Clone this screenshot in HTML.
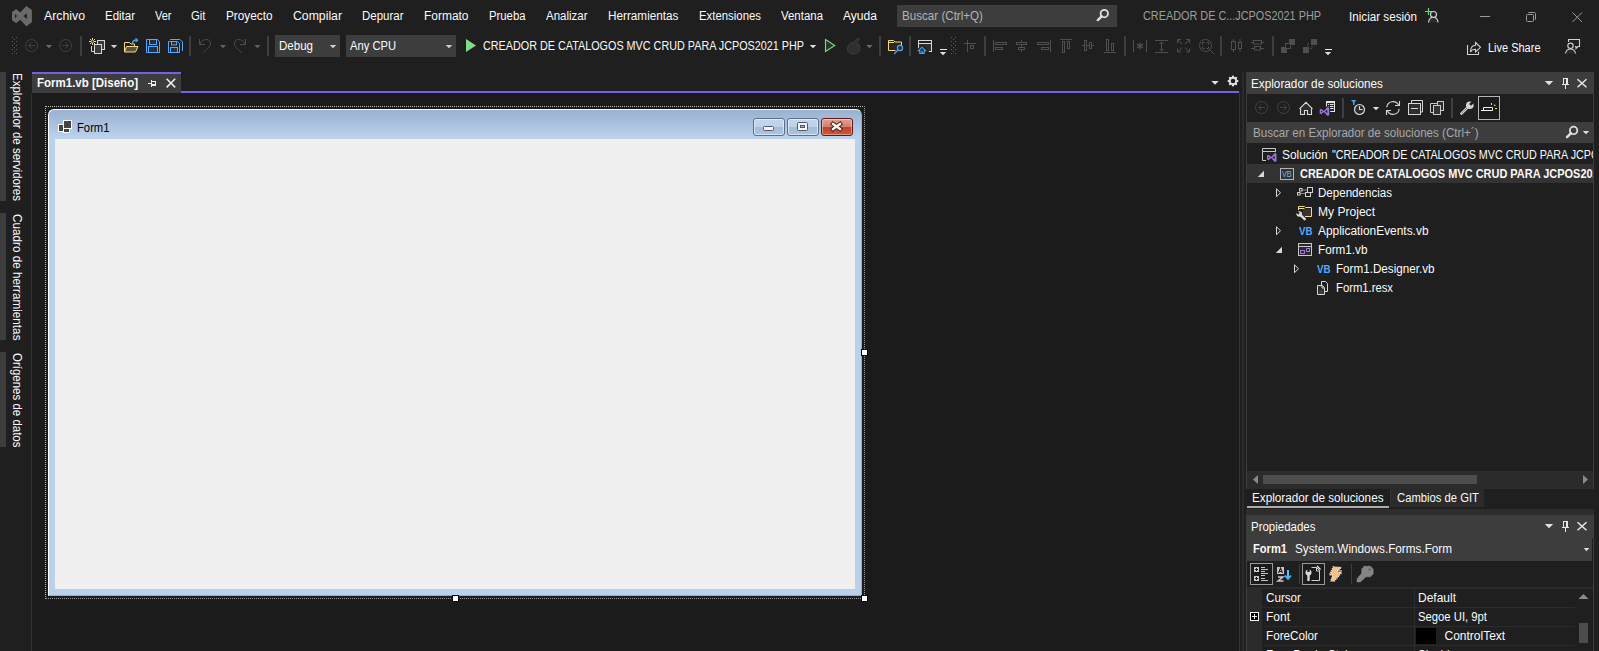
<!DOCTYPE html>
<html lang="es"><head><meta charset="utf-8"><title>Form1.vb [Diseño] - Visual Studio</title>
<style>
html,body{margin:0;padding:0;background:#1f1f1f;overflow:hidden}
#app{position:relative;width:1599px;height:651px;overflow:hidden;background:#1f1f1f;font-family:"Liberation Sans",sans-serif;font-size:12px}
#app>div,#app>svg,#app>span{position:absolute;display:block}
#app>svg{overflow:visible}
.t{white-space:pre;line-height:16px;transform-origin:0 50%;color:#fafafa}

</style></head>
<body>
<div id="app">
<div style="left:897px;top:5px;width:220px;height:22px;background:#3d3d3d;"></div>
<div style="left:275px;top:35px;width:65px;height:22px;background:#3d3d3d;"></div>
<div style="left:346px;top:35px;width:110px;height:22px;background:#3d3d3d;"></div>
<div style="left:80px;top:36px;width:2px;height:20px;background:#3f3f3f;"></div>
<div style="left:189px;top:36px;width:2px;height:20px;background:#3f3f3f;"></div>
<div style="left:267px;top:36px;width:2px;height:20px;background:#3f3f3f;"></div>
<div style="left:879px;top:36px;width:2px;height:20px;background:#3f3f3f;"></div>
<div style="left:909px;top:36px;width:2px;height:20px;background:#3f3f3f;"></div>
<div style="left:984px;top:36px;width:2px;height:20px;background:#3f3f3f;"></div>
<div style="left:1124px;top:36px;width:2px;height:20px;background:#3f3f3f;"></div>
<div style="left:1220px;top:36px;width:2px;height:20px;background:#3f3f3f;"></div>
<div style="left:1272px;top:36px;width:2px;height:20px;background:#3f3f3f;"></div>
<div style="left:0px;top:72px;width:6px;height:129px;background:#3d3d3d;"></div>
<div style="left:0px;top:213px;width:6px;height:127px;background:#3d3d3d;"></div>
<div style="left:0px;top:352px;width:6px;height:95px;background:#3d3d3d;"></div>
<div style="left:32px;top:72px;width:149px;height:2px;background:#7160e8;"></div>
<div style="left:32px;top:74px;width:149px;height:18px;background:#3d3d3d;"></div>
<div style="left:181px;top:91px;width:1058px;height:2px;background:#7160e8;"></div>
<div style="left:32px;top:74px;width:149px;height:19px;background:#3d3d3d;"></div>
<div style="left:32px;top:93px;width:1207px;height:558px;background:#1b1b1b;"></div>
<div style="left:31px;top:93px;width:1px;height:558px;background:#333333;"></div>
<div style="left:1239px;top:93px;width:1px;height:558px;background:#333333;"></div>
<div style="left:1242px;top:72px;width:2px;height:579px;background:#2b2b2b;"></div>
<div style="left:45px;top:106px;width:820px;height:493px;background:transparent;box-sizing:border-box;border:1px dotted #9a9a9a;border-top-color:#bdbdbd;border-left-color:#bdbdbd"></div>
<div style="left:48px;top:109px;width:814px;height:487px;background:#b9d1ea;box-sizing:border-box;border:1px solid #fff;border-right-color:#35d2f2;border-bottom-color:#35d2f2;border-radius:6px 6px 0 0;background:linear-gradient(#9ab2d0 0,#a9c1de 14px,#bdd3ec 28px,#b9d1ea 29px)"></div>
<div style="left:55px;top:139px;width:800px;height:450px;background:#f0f0f0;"></div>
<div style="left:753px;top:118px;width:32px;height:18px;background:#b4cbe4;box-sizing:border-box;border:1px solid #5c6f8a;border-radius:3px;box-shadow:inset 0 0 0 1px rgba(255,255,255,.55);background:linear-gradient(#c3d7ee 0,#bcd1ea 8px,#a3bcd9 8px,#aec6e1 18px)"></div>
<div style="left:787px;top:118px;width:32px;height:18px;background:#b4cbe4;box-sizing:border-box;border:1px solid #5c6f8a;border-radius:3px;box-shadow:inset 0 0 0 1px rgba(255,255,255,.55);background:linear-gradient(#c3d7ee 0,#bcd1ea 8px,#a3bcd9 8px,#aec6e1 18px)"></div>
<div style="left:821px;top:118px;width:32px;height:18px;background:#c9503a;box-sizing:border-box;border:1px solid #5a1a1a;border-radius:3px;box-shadow:inset 0 0 0 1px rgba(255,255,255,.4);background:linear-gradient(#e0a092 0,#d47f6e 8px,#c0432b 8px,#cf5b3d 18px)"></div>
<div style="left:862px;top:350px;width:5px;height:5px;background:#fff;box-sizing:border-box;border:1px solid #000;width:7px;height:7px;margin:-1px"></div>
<div style="left:453px;top:596px;width:5px;height:5px;background:#fff;box-sizing:border-box;border:1px solid #000;width:7px;height:7px;margin:-1px"></div>
<div style="left:862px;top:596px;width:5px;height:5px;background:#fff;box-sizing:border-box;border:1px solid #000;width:7px;height:7px;margin:-1px"></div>
<div style="left:1246px;top:72px;width:348px;height:22px;background:#3d3d3d;"></div>
<div style="left:1246px;top:94px;width:348px;height:395px;background:#1f1f1f;box-sizing:border-box;border-left:1px solid #3d3d3d;border-right:1px solid #3d3d3d"></div>
<div style="left:1478px;top:96px;width:22px;height:24px;background:#1b1b1b;box-sizing:border-box;border:1px solid #b4b4b4"></div>
<div style="left:1247px;top:122px;width:346px;height:21px;background:#3d3d3d;"></div>
<div style="left:1247px;top:164px;width:346px;height:19px;background:#333333;"></div>
<div style="left:1247px;top:471px;width:346px;height:18px;background:#2b2b2b;"></div>
<div style="left:1263px;top:475px;width:214px;height:9px;background:#4d4d4d;"></div>
<div style="left:1247px;top:506px;width:142px;height:2px;background:#ababab;"></div>
<div style="left:1390px;top:489px;width:94px;height:18px;background:#2b2b2b;box-sizing:border-box;border-left:1px solid #333"></div>
<div style="left:1246px;top:509px;width:348px;height:6px;background:#2d2d2d;"></div>
<div style="left:1246px;top:515px;width:348px;height:46px;background:#3d3d3d;"></div>
<div style="left:1592px;top:538px;width:1px;height:23px;background:#1f1f1f;"></div>
<div style="left:1246px;top:561px;width:348px;height:90px;background:#1f1f1f;box-sizing:border-box;border-left:1px solid #3d3d3d;border-right:1px solid #3d3d3d"></div>
<div style="left:1250px;top:563px;width:23px;height:22px;background:#1b1b1b;box-sizing:border-box;border:1px solid #9a9a9a"></div>
<div style="left:1302px;top:563px;width:23px;height:22px;background:#1b1b1b;box-sizing:border-box;border:1px solid #9a9a9a"></div>
<div style="left:1299px;top:564px;width:1px;height:20px;background:#3f3f3f;"></div>
<div style="left:1351px;top:564px;width:1px;height:20px;background:#3f3f3f;"></div>
<div style="left:1247px;top:587px;width:346px;height:64px;background:#2b2b2b;"></div>
<div style="left:1262px;top:589px;width:152px;height:18px;background:#1f1f1f;"></div>
<div style="left:1415px;top:589px;width:160px;height:18px;background:#1f1f1f;"></div>
<div style="left:1262px;top:608px;width:152px;height:18px;background:#1f1f1f;"></div>
<div style="left:1415px;top:608px;width:160px;height:18px;background:#1f1f1f;"></div>
<div style="left:1262px;top:627px;width:152px;height:18px;background:#1f1f1f;"></div>
<div style="left:1415px;top:627px;width:160px;height:18px;background:#1f1f1f;"></div>
<div style="left:1262px;top:646px;width:152px;height:18px;background:#1f1f1f;"></div>
<div style="left:1415px;top:646px;width:160px;height:18px;background:#1f1f1f;"></div>
<div style="left:1416px;top:628px;width:20px;height:16px;background:#000;"></div>
<div style="left:1575px;top:589px;width:18px;height:62px;background:#1f1f1f;"></div>
<div style="left:1579px;top:623px;width:9px;height:20px;background:#4d4d4d;"></div>
<svg style="left:0;top:0" width="1599" height="651" viewBox="0 0 1599 651"><path transform="translate(12,6)" fill="#6a6a6a" fill-rule="evenodd" d="M0,6.1 L4.2,3 L8.2,6.4 L14.3,0 L19.9,4 V16.2 L14.3,20.2 L8.2,13.8 L4.2,17.2 L0,14.2Z M3.1,7.7 V12.3 L5,10Z M14.9,7.2 V13 L11.6,10Z"/><rect x="12" y="37" width="1" height="1" fill="#5e5e5e"/><rect x="16" y="37" width="1" height="1" fill="#5e5e5e"/><rect x="14" y="39" width="1" height="1" fill="#5e5e5e"/><rect x="12" y="41" width="1" height="1" fill="#5e5e5e"/><rect x="16" y="41" width="1" height="1" fill="#5e5e5e"/><rect x="14" y="43" width="1" height="1" fill="#5e5e5e"/><rect x="12" y="45" width="1" height="1" fill="#5e5e5e"/><rect x="16" y="45" width="1" height="1" fill="#5e5e5e"/><rect x="14" y="47" width="1" height="1" fill="#5e5e5e"/><rect x="12" y="49" width="1" height="1" fill="#5e5e5e"/><rect x="16" y="49" width="1" height="1" fill="#5e5e5e"/><rect x="14" y="51" width="1" height="1" fill="#5e5e5e"/><rect x="12" y="53" width="1" height="1" fill="#5e5e5e"/><rect x="16" y="53" width="1" height="1" fill="#5e5e5e"/><g fill="none" stroke="#404040" stroke-width="1"><circle cx="31.5" cy="45.5" r="6"/><path d="M35,45.5H28.5M31.5,42.5l-3,3l3,3"/><circle cx="65.5" cy="45.5" r="6"/><path d="M62,45.5H68.5M65.5,42.5l3,3l-3,3"/></g><path d="M45.8,45h6.4l-3.2,3.2z" fill="#6a6a6a"/><g fill="none" stroke="#f3d98b" stroke-width="1"><path d="M92.5,38v7M89,41.5h7M90,39l5,5M95,39l-5,5"/></g><rect x="91.5" y="40.5" width="2" height="2" fill="#1f1f1f"/><g stroke="#d6d6d6" stroke-width="1"><path d="M91.5,46V51.5H94.5" fill="none"/><rect x="97.5" y="40.5" width="7" height="9" fill="#3a3a3a"/><rect x="94.5" y="44.5" width="7" height="9" fill="#3a3a3a"/></g><path d="M110.8,45h6.4l-3.2,3.2z" fill="#d0d0d0"/><g stroke="#f3d98b" stroke-width="1" fill="none"><path d="M124.5,52V42.5h5l1.5,1.5h3.5V46"/><path d="M126.5,46.5H138l-2.5,5.5H124.5z" fill="#5e543a"/></g><path d="M132.5,44c0-2.5,1.5-4,4-4" fill="none" stroke="#4aa5f0" stroke-width="1.4"/><path d="M135.6,37.6l2.9,2.6l-2.9,2.6z" fill="#4aa5f0"/><g stroke="#55aaff" stroke-width="1" fill="none"><path d="M146.5,39.5H157.5l2,2V52.5H146.5z"/><rect x="149.5" y="39.5" width="7" height="5" fill="#2a3038"/><rect x="148.5" y="46.5" width="9" height="6" fill="#2a3038"/></g><g stroke="#55aaff" stroke-width="1" fill="none"><path d="M170,39.5H180l2.5,2.5V51"/><path d="M168.5,41.5H177.5l2,2V52.5H168.5z"/><rect x="171.5" y="41.5" width="5" height="3.5" fill="#2a3038"/><rect x="170.5" y="47.5" width="7" height="5" fill="#2a3038"/></g><g fill="none" stroke="#4d4d4d" stroke-width="1"><path d="M199.5,39V44.5H205"/><path d="M200,44c1.5-3,3.5-4.5,6.3-4.5c2.8,0,4.5,2,4.3,4.6c-.2,2-1.6,3.2-7.3,8.6"/><path d="M245.5,39V44.5H240"/><path d="M245,44c-1.500-3-3.500-4.500-6.300-4.500c-2.800,0-4.500,2-4.300,4.600c.2,2,1.600,3.200,7.300,8.600"/></g><path d="M219.8,45h6.4l-3.2,3.2z" fill="#5e5e5e"/><path d="M254.3,45h6.4l-3.2,3.2z" fill="#5e5e5e"/><path d="M329.8,45h6.4l-3.2,3.2z" fill="#d0d0d0"/><path d="M445.8,45h6.4l-3.2,3.2z" fill="#d0d0d0"/><path d="M466,39l10,6.500l-10,6.500z" fill="#7edc8b"/><path d="M809.8,45h6.4l-3.2,3.2z" fill="#e0e0e0"/><path d="M825.5,39.5V51.500l9.200-6z" fill="#25362a" stroke="#7adb8a" stroke-width="1.100"/><path d="M859.500,38.500c-4,.5-6,3-6.500,5.500c-1-.5-1.500-1-1.500-2c-2.500,2-4,4.500-4,7c0,3,2.500,5,6,5c4,0,6.500-2.500,6.500-5.500c0-1.500-.5-2.500-1-4c-.5,1-1,1.500-2,2c.5-3,.5-5.500,2.500-8z" fill="#2e2e2e" stroke="#3e3e3e" stroke-width="1"/><path d="M866.3,45h6.4l-3.2,3.2z" fill="#6a6a6a"/><path d="M888.500,50.500V40.500h5l1.500,1.500h6.500v5.500h-5v3z" fill="#2d2920" stroke="none"/><path d="M895.500,50.500H888.500V40.500h5l1.500,1.500h6.500v4.500M889,42.500h5" fill="none" stroke="#f3d98b"/><circle cx="900" cy="48" r="2.600" fill="#26323f" stroke="#4aa5f0" stroke-width="1.200"/><path d="M898,50l-4,4" stroke="#4aa5f0" stroke-width="1.200"/><rect x="918.500" y="40.500" width="13" height="11" fill="#2e2e2e" stroke="#d8d8d8"/><rect x="919" y="41" width="12" height="2" fill="#1f1f1f"/><path d="M919,43.500h12" stroke="#d8d8d8"/><path d="M922,46.500l-4.300,4.200h1.600V54h5.400V50.700h1.600z" fill="#1f1f1f" stroke="#1f1f1f" stroke-width="2.500"/><path d="M922,47.200l-3.600,3.600h1.400V53.500h4.400V50.800h1.400z" fill="#23364a" stroke="#4aa5f0" stroke-width="1.100"/><rect x="921.300" y="51.300" width="1.500" height="1.700" fill="#4aa5f0"/><rect x="940" y="49" width="7" height="1" fill="#e8e8e8"/><path d="M939.8,52h6.4l-3.2,3.2z" fill="#e0e0e0"/><rect x="951" y="37" width="1" height="1" fill="#5e5e5e"/><rect x="955" y="37" width="1" height="1" fill="#5e5e5e"/><rect x="953" y="39" width="1" height="1" fill="#5e5e5e"/><rect x="951" y="41" width="1" height="1" fill="#5e5e5e"/><rect x="955" y="41" width="1" height="1" fill="#5e5e5e"/><rect x="953" y="43" width="1" height="1" fill="#5e5e5e"/><rect x="951" y="45" width="1" height="1" fill="#5e5e5e"/><rect x="955" y="45" width="1" height="1" fill="#5e5e5e"/><rect x="953" y="47" width="1" height="1" fill="#5e5e5e"/><rect x="951" y="49" width="1" height="1" fill="#5e5e5e"/><rect x="955" y="49" width="1" height="1" fill="#5e5e5e"/><rect x="953" y="51" width="1" height="1" fill="#5e5e5e"/><rect x="951" y="53" width="1" height="1" fill="#5e5e5e"/><rect x="955" y="53" width="1" height="1" fill="#5e5e5e"/><g fill="none" stroke="#4f4f4f" stroke-width="1"><path d="M967.500,40V52M964,43.500H976"/><rect x="970.500" y="45.500" width="3" height="3"/><path d="M993.500,40V52"/><rect x="995.500" y="42.500" width="11" height="2"/><rect x="995.500" y="47.500" width="7" height="2"/><path d="M1021.500,40V42.500M1021.500,44.500V47.500M1021.500,49.500V52"/><rect x="1016.500" y="42.500" width="10" height="2"/><rect x="1018.500" y="47.500" width="6" height="2"/><path d="M1050.500,40V52"/><rect x="1037.500" y="42.500" width="11" height="2"/><rect x="1041.500" y="47.500" width="7" height="2"/><path d="M1060,39.500H1072"/><rect x="1062.500" y="41.500" width="2" height="11"/><rect x="1067.500" y="41.500" width="2" height="7"/><path d="M1082,45.500H1084.500M1086.500,45.500H1089.500M1091.500,45.500H1094"/><rect x="1084.500" y="40.500" width="2" height="10"/><rect x="1089.500" y="42.500" width="2" height="6"/><path d="M1104,52.500H1116"/><rect x="1106.500" y="39.500" width="2" height="11"/><rect x="1111.500" y="43.500" width="2" height="7"/><path d="M1133.500,40V52M1146.500,40V52"/><path d="M1140,42.500V49.500M1137,44.200l6,3.600M1143,44.200l-6,3.600" stroke-width="1.400"/><path d="M1155,40.500H1168M1155,52.500H1168M1161.500,42V51M1159.500,44l2-2l2,2M1159.500,49l2,2l2-2"/><path d="M1177.500,43V39.500H1181M1186,39.500H1189.500V43M1189.500,48.500V52H1186M1181,52H1177.500V48.500M1178,40l4,4M1189,40l-4,4M1189,51.500l-4-4M1178,51.500l4-4"/><circle cx="1205.500" cy="45.500" r="6"/><path d="M1210,50l4,4M1202.500,44.500V42.500h2M1206.500,42.500h2v2M1208.500,46.500v2h-2M1204.500,48.500h-2v-2"/><path d="M1233.500,39V52M1240,39V52"/><rect x="1231.500" y="41.500" width="4" height="8" fill="#1f1f1f"/><rect x="1238.500" y="42.500" width="3" height="6" fill="#1f1f1f"/><path d="M1251,42.500H1264M1251,48.500H1264"/><rect x="1253.500" y="40.500" width="8" height="3.500" fill="#1f1f1f"/><rect x="1254.500" y="46.500" width="6" height="3.500" fill="#1f1f1f"/></g><rect x="1281" y="47" width="6" height="6" fill="#4f4f4f"/><rect x="1289" y="39" width="6" height="6" fill="#4f4f4f"/><rect x="1285.500" y="43.500" width="5" height="5" fill="#1f1f1f" stroke="#4f4f4f"/><rect x="1303" y="47" width="6" height="6" fill="#4f4f4f"/><rect x="1311" y="39" width="6" height="6" fill="#4f4f4f"/><path d="M1307.500,46V43.500h2.500M1312,46V48.500h-2" fill="none" stroke="#4f4f4f" stroke-dasharray="1.500,1"/><rect x="1325" y="49" width="7" height="1" fill="#e8e8e8"/><path d="M1324.8,52h6.4l-3.2,3.2z" fill="#e0e0e0"/><g fill="none" stroke="#d0d0d0" stroke-width="1.100"><path d="M1467.500,45V54.500H1478.500V51.500"/><path d="M1475.500,42.500L1480.500,47.300L1475.500,52V49.300C1473,49.300 1471.500,50 1470.500,52C1470.500,48 1472.500,45.500 1475.500,45.300Z"/></g><g fill="none" stroke="#d0d0d0" stroke-width="1.100"><path d="M1568.500,42V39.500H1579.500V46.500H1578L1576,48.500V46.500H1575"/><circle cx="1570.500" cy="45.800" r="2.700" fill="#1f1f1f"/><path d="M1565.500,53.500c.5-3,2.500-4.500,5-4.500s4.500,1.500,5,4.500" fill="#2a2a2a"/></g><path d="M1428.500,8v7M1425,11.500h7" stroke="#6fd77a" stroke-width="1.200" fill="none"/><g fill="none" stroke="#d8d8d8" stroke-width="1.100"><circle cx="1433.500" cy="14.500" r="3" fill="#1f1f1f"/><path d="M1428.500,22.500c.4-3.500,2.400-5.200,4.800-5.200s4.400,1.700,4.800,5.200" fill="#2c2c2c"/></g><rect x="1480" y="16" width="10" height="1" fill="#9b9b9b"/><g fill="none" stroke="#9b9b9b" stroke-width="1"><rect x="1526.500" y="14.500" width="7" height="7" rx="1"/><path d="M1528.500,13V12.500H1534.500a1,1 0 0 1 1,1V19.500H1535"/></g><path d="M1572.500,12.500l9.500,9.500M1582,12.500l-9.500,9.500" stroke="#9b9b9b" stroke-width="1" fill="none"/><circle cx="1104.300" cy="13.600" r="3.700" fill="none" stroke="#e0e0e0" stroke-width="1.800"/><path d="M1101.600,16.300l-3.800,3.800" stroke="#e0e0e0" stroke-width="2.400" stroke-linecap="round"/></svg>
<svg style="left:0;top:0" width="1599" height="651" viewBox="0 0 1599 651"><g fill="none" stroke="#f0f0f0" stroke-width="1"><path d="M148,83.500H151.500M151.500,80V87M152,81.500h4M152,85.500h4M155.500,81V86"/></g><rect x="152" y="84" width="4" height="1.500" fill="#f0f0f0"/><path d="M166.6,78.8l8.6,8.6M175.2,78.8l-8.6,8.6" stroke="#f0f0f0" stroke-width="1.5" fill="none"/><path d="M1211.3,81h7.4l-3.7,3.7z" fill="#e0e0e0"/><g transform="translate(1233,81)"><circle r="3.300" fill="none" stroke="#e0e0e0" stroke-width="2"/><circle r="1.300" fill="none" stroke="#1f1f1f" stroke-width=".8"/><rect x="-1" y="-5.300" width="2" height="2" fill="#e0e0e0" transform="rotate(0)"/><rect x="-1" y="-5.300" width="2" height="2" fill="#e0e0e0" transform="rotate(45)"/><rect x="-1" y="-5.300" width="2" height="2" fill="#e0e0e0" transform="rotate(90)"/><rect x="-1" y="-5.300" width="2" height="2" fill="#e0e0e0" transform="rotate(135)"/><rect x="-1" y="-5.300" width="2" height="2" fill="#e0e0e0" transform="rotate(180)"/><rect x="-1" y="-5.300" width="2" height="2" fill="#e0e0e0" transform="rotate(225)"/><rect x="-1" y="-5.300" width="2" height="2" fill="#e0e0e0" transform="rotate(270)"/><rect x="-1" y="-5.300" width="2" height="2" fill="#e0e0e0" transform="rotate(315)"/></g><path d="M1544.8,81h8.4l-4.2,4.2z" fill="#e0e0e0"/><g fill="none" stroke="#e8e8e8" stroke-width="1"><path d="M1563.5,78V84M1567.5,78V84M1563,78.5h5M1562,84.5h7M1565.5,85V89"/></g><rect x="1566" y="78" width="1.500" height="6" fill="#e8e8e8"/><path d="M1577.5,79.3l9,8M1586.5,79.3l-9,8" stroke="#e8e8e8" stroke-width="1.5" fill="none"/><path d="M1544.8,524h8.4l-4.2,4.2z" fill="#e0e0e0"/><g fill="none" stroke="#e8e8e8" stroke-width="1"><path d="M1563.5,521V527M1567.5,521V527M1563,521.5h5M1562,527.5h7M1565.5,528V532"/></g><rect x="1566" y="521" width="1.500" height="6" fill="#e8e8e8"/><path d="M1577.5,522.3l9,8M1586.5,522.3l-9,8" stroke="#e8e8e8" stroke-width="1.5" fill="none"/><g fill="none" stroke="#424242" stroke-width="1"><circle cx="1261.500" cy="107.500" r="6"/><path d="M1265,107.500H1258.500M1261.500,104.500l-3,3l3,3"/><circle cx="1283.500" cy="107.500" r="6"/><path d="M1280,107.500H1286.500M1283.500,104.500l3,3l-3,3"/></g><path d="M1300.500,108V114.500H1304.500V110.500H1307.500V114.500H1311.500V108L1306,102.500Z" fill="#2e2e2e" stroke="none"/><path d="M1299.500,108.800L1306,102.300L1312.500,108.800M1300.500,108.500V114.500H1304.500V110.500H1307.500V114.500H1311.500V108.500" fill="none" stroke="#d8d8d8" stroke-width="1.100"/><rect x="1326.500" y="101.500" width="8" height="10" fill="#2a2a2a" stroke="#e6e6e6"/><rect x="1326" y="101" width="9" height="2" fill="#e6e6e6"/><rect x="1328" y="104" width="1" height="1" fill="#e6e6e6"/><rect x="1330" y="104" width="3.500" height="1" fill="#e6e6e6"/><rect x="1328" y="106" width="1" height="1" fill="#e6e6e6"/><rect x="1330" y="106" width="3.500" height="1" fill="#e6e6e6"/><rect x="1328" y="108" width="1" height="1" fill="#e6e6e6"/><rect x="1330" y="108" width="3.500" height="1" fill="#e6e6e6"/><g transform="translate(1319.7,107) scale(1.0)"><path d="M0,2.600 L1.500,1.800 L4.200,4 L7.800,0 L9.500,.8 V8.200 L7.800,9 L4.200,5 L1.500,7.200 L0,6.400Z M1.300,3.400 V5.600 L2.700,4.500Z M7.600,2.700 V6.300 L5.400,4.500Z" fill="#1f1f1f" stroke="#1f1f1f" stroke-width="2" stroke-linejoin="round"/><path d="M0,2.600 L1.500,1.800 L4.200,4 L7.800,0 L9.500,.8 V8.200 L7.800,9 L4.200,5 L1.500,7.200 L0,6.400Z M1.300,3.400 V5.600 L2.700,4.500Z M7.600,2.700 V6.300 L5.400,4.500Z" fill="#a074db" fill-rule="evenodd"/></g><rect x="1342" y="98" width="2" height="20" fill="#3f3f3f"/><rect x="1451" y="98" width="2" height="20" fill="#3f3f3f"/><path d="M1351,100h5.500l-2,2.300V105h-1.500V102.300z" fill="#4aa5f0"/><circle cx="1359.500" cy="109.500" r="5" fill="#2e2e2e" stroke="#d8d8d8" stroke-width="1.200"/><path d="M1359.500,106V109.500H1362.500" fill="none" stroke="#d8d8d8" stroke-width="1.100"/><path d="M1372.8,107h6.4l-3.2,3.2z" fill="#e0e0e0"/><g fill="none" stroke="#d8d8d8" stroke-width="1.100"><path d="M1386.800,107.300A6.200,6.200 0 0 1 1398.600,105.200"/><path d="M1399.500,101V105.500H1395"/><path d="M1399.200,108.700A6.200,6.200 0 0 1 1387.400,110.800"/><path d="M1386.500,115V110.500H1391"/></g><g fill="none" stroke="#d8d8d8" stroke-width="1"><path d="M1411.500,103V100.500H1422.500V112H1421"/><rect x="1408.500" y="103.500" width="12" height="11" fill="#2e2e2e"/><path d="M1411,108.500H1418"/></g><g stroke="#c8c8c8" stroke-width="1" fill="none"><rect x="1437.500" y="101.500" width="6" height="9" fill="#2c2c2c"/><path d="M1437,103.500H1430.500V112.500H1433.500"/><rect x="1433.500" y="105.500" width="7" height="9" fill="#333"/></g><path d="M1468.2,106.8l-6.800000000000001,6.800000000000001" stroke="#d4d4d4" stroke-width="2.600" stroke-linecap="round"/><path d="M1468.2,106.8l-6.6000000000000005,6.6000000000000005" stroke="#1f1f1f" stroke-width=".8" stroke-dasharray="1,.8"/><circle cx="1469.8" cy="105.2" r="3.8" fill="#d4d4d4"/><path d="M1470.1,104.9l3.500,-3.500" stroke="#1f1f1f" stroke-width="2.700"/><path d="M1481,110.500H1492.500V107.500H1483.500V110.500" fill="none" stroke="#f0f0f0" stroke-width="1"/><rect x="1491" y="103" width="1" height="2" fill="#f3d98b"/><rect x="1494" y="104.500" width="1.500" height="1.500" fill="#d6bc72" transform="rotate(45 1494.700 105.200)"/><rect x="1495" y="108" width="2" height="1" fill="#f3d98b"/><circle cx="1573.600" cy="130.400" r="3.700" fill="none" stroke="#e0e0e0" stroke-width="1.800"/><path d="M1571,133.200l-4,4" stroke="#e0e0e0" stroke-width="2.400" stroke-linecap="round"/><path d="M1582.8,131h6.4l-3.2,3.2z" fill="#e0e0e0"/><path d="M1264,177h-6.200l6.200,-6.200z" fill="#d8d8d8"/><path d="M1276.5,188.8V196.7L1280.5,192.75Z" fill="none" stroke="#d8d8d8" stroke-width="1"/><path d="M1276.5,226.8V234.7L1280.5,230.75Z" fill="none" stroke="#d8d8d8" stroke-width="1"/><path d="M1282,253h-6.200l6.200,-6.200z" fill="#d8d8d8"/><path d="M1294.5,264.8V272.7L1298.5,268.75Z" fill="none" stroke="#d8d8d8" stroke-width="1"/><path d="M1266,160.500H1262.500V148.500H1275.500V153M1263,151.500H1275" fill="none" stroke="#c8c8c8"/><g transform="translate(1267,153) scale(1.0)"><path d="M0,2.600 L1.500,1.800 L4.200,4 L7.800,0 L9.500,.8 V8.200 L7.800,9 L4.200,5 L1.500,7.200 L0,6.400Z M1.300,3.400 V5.600 L2.700,4.500Z M7.600,2.700 V6.300 L5.400,4.500Z" fill="#1f1f1f" stroke="#1f1f1f" stroke-width="2" stroke-linejoin="round"/><path d="M0,2.600 L1.500,1.800 L4.200,4 L7.800,0 L9.500,.8 V8.200 L7.800,9 L4.200,5 L1.500,7.200 L0,6.400Z M1.300,3.400 V5.600 L2.700,4.500Z M7.600,2.700 V6.300 L5.400,4.500Z" fill="#a074db" fill-rule="evenodd"/></g><rect x="1280.500" y="168.500" width="13" height="11" fill="none" stroke="#b4b4b4"/><g fill="#1f1f1f" stroke="#d0d0d0" stroke-width="1"><path d="M1300,193.500H1306M1302,190H1307" stroke="#8a8a8a" fill="none"/><rect x="1297.500" y="192.500" width="2.500" height="2.500"/><rect x="1299.500" y="188.500" width="2.500" height="2.500"/><rect x="1307.500" y="187.500" width="5" height="5"/><rect x="1305.500" y="192.500" width="5" height="4"/></g><rect x="1303" y="209" width="8" height="7" fill="#38342a"/><path d="M1298.500,210V206.500h6l1,1h6V216.500H1305M1299,208.500h5.500" fill="none" stroke="#f3d98b"/><path d="M1300.500,215.200l4.200,3.900" stroke="#dcdcdc" stroke-width="2.500" stroke-linecap="round"/><circle cx="1299.300" cy="214" r="2.800" fill="#dcdcdc"/><path d="M1299,213.700l-3,-3" stroke="#1f1f1f" stroke-width="2.200"/><rect x="1298.500" y="243.500" width="13" height="12" fill="#2a2a2a" stroke="#c8c8c8"/><path d="M1299,246.500h12" stroke="#c8c8c8"/><rect x="1300.500" y="250.500" width="4" height="3" fill="none" stroke="#a074db"/><rect x="1306.500" y="248.500" width="3" height="3" fill="none" stroke="#a074db"/><g stroke="#d8d8d8" fill="#1f1f1f" stroke-width="1"><path d="M1321.500,281.500h4l2,2V291.500h-6z"/><path d="M1317.500,285.500h5l2,2V294.500h-7z" fill="#2c2c2c"/><path d="M1322,286v2h2" fill="none"/></g><rect x="1319" y="290" width="4" height="4" fill="#3c3c3c"/><path d="M1258,475v9l-5,-4.500z" fill="#8a8a8a"/><path d="M1583,475v9l5,-4.500z" fill="#8a8a8a"/><path d="M1578.500,599h10l-5,-5z" fill="#8a8a8a"/><path d="M1583.8,548h5.4l-2.7,3.2z" fill="#e0e0e0"/><rect x="1254" y="567" width="5" height="5" fill="#c8c8c8"/><path d="M1256.500,568v3M1255,569.5h3" stroke="#1b1b1b" stroke-width="1"/><rect x="1254" y="576" width="5" height="5" fill="#c8c8c8"/><path d="M1256.500,577v3M1255,578.5h3" stroke="#1b1b1b" stroke-width="1"/><rect x="1261" y="567" width="4" height="1" fill="#c8c8c8"/><rect x="1261" y="569" width="6" height="1" fill="#c8c8c8"/><rect x="1261" y="571" width="4" height="1" fill="#c8c8c8"/><rect x="1261" y="573" width="6" height="1" fill="#c8c8c8"/><rect x="1261" y="575" width="4" height="1" fill="#c8c8c8"/><rect x="1261" y="578" width="4" height="1" fill="#c8c8c8"/><rect x="1261" y="580" width="6" height="1" fill="#c8c8c8"/><rect x="1266" y="569" width="2" height="1" fill="#c8c8c8"/><rect x="1266" y="573" width="2" height="1" fill="#c8c8c8"/><rect x="1266" y="580" width="2" height="1" fill="#c8c8c8"/><rect x="1277" y="567" width="7" height="7" fill="#c8c8c8"/><path d="M1278.500,573l2,-5l2,5M1279.300,571.500h2.400" stroke="#1f1f1f" fill="none" stroke-width="1.100"/><path d="M1278,577h5l-5,4h5.500" fill="none" stroke="#c8c8c8" stroke-width="1.500"/><path d="M1288,570v7" stroke="#4fc1ff" stroke-width="2" fill="none"/><path d="M1285,575.500l3,3.500l3,-3.500" stroke="#4fc1ff" stroke-width="1.600" fill="none"/><path d="M1311.500,567.500h5l3,3V580.500h-8" fill="#1b1b1b" stroke="#d0d0d0"/><path d="M1316.500,567.500v3.500h3" fill="none" stroke="#d0d0d0"/><path d="M1317,566l3.500,3.500" stroke="#f0f0f0" stroke-width="1.200"/><path d="M1308.500,574v7" stroke="#d8d8d8" stroke-width="2.400"/><circle cx="1308.500" cy="572.500" r="3" fill="#d8d8d8"/><rect x="1307.300" y="568.500" width="2.400" height="3.500" fill="#1b1b1b"/><path d="M1333.500,566.500L1341.500,567L1337.300,572H1342L1334,581.500H1330.500L1332.500,575.500H1329.500Z" fill="#f7c18e"/><path d="M1333.300,566.300L1329.300,575.200M1332.700,575.700L1330.500,581.500M1334.300,581.500L1342,572.300M1337.300,571.500L1341.500,567" fill="none" stroke="#fff" stroke-width="1.100" stroke-dasharray="1,1"/><path d="M1338.500,571h3.500" stroke="#fff" stroke-width="1"/><path d="M1364.200,566.200h6.200l2.800,2.800v5l-2.800,2.800h-4.400l-5.700,5.200h-3.300v-3.300l4.700,-5.500v-4.200z" fill="#858585" stroke="#9a9a9a" stroke-width=".8" stroke-dasharray="1,1"/><rect x="1368.300" y="568.200" width="2.600" height="2.600" fill="#6a6a6a" transform="rotate(40 1369.600 569.500)"/><rect x="1250.500" y="612.500" width="8" height="8" fill="#000" stroke="#f4f4f4"/><path d="M1252,616.500h5M1254.500,614v5" stroke="#f4f4f4"/><rect x="63.500" y="120.500" width="8" height="8" fill="#444" stroke="#fff"/><rect x="58.500" y="124.500" width="5" height="7" fill="#444" stroke="#fff"/><rect x="63.500" y="128.500" width="6" height="4" fill="#444" stroke="#fff"/><rect x="763.500" y="126.500" width="10" height="4" rx="1" fill="#f4f4f4" stroke="#535666"/><rect x="797.500" y="122.500" width="10" height="8" rx="1" fill="#f4f4f4" stroke="#535666"/><rect x="800.500" y="125.500" width="4" height="2" fill="#9db6d4" stroke="#535666"/><path d="M833,124l7,5M840,124l-7,5" stroke="#4a1a16" stroke-width="4.400" stroke-linecap="square"/><path d="M833,124l7,5M840,124l-7,5" stroke="#f6f6f6" stroke-width="2.400" stroke-linecap="square"/></svg>
<span class="t" style="left:1282.3px;top:166.3px;color:#6ab4ff;font-size:9px;transform:scaleX(0.8073);">VB</span>
<span class="t" style="left:1298.5px;top:223.5px;color:#55aaff;font-weight:700;font-size:10px;transform:scaleX(0.9708);">VB</span>
<span class="t" style="left:1316.5px;top:261.5px;color:#55aaff;font-weight:700;font-size:10px;transform:scaleX(0.9708);">VB</span>
<span class="t" style="left:44px;top:8.0px;color:#fafafa;transform:scaleX(1.0246);">Archivo</span>
<span class="t" style="left:105px;top:8.0px;color:#fafafa;transform:scaleX(0.9567);">Editar</span>
<span class="t" style="left:155px;top:8.0px;color:#fafafa;transform:scaleX(0.9159);">Ver</span>
<span class="t" style="left:191px;top:8.0px;color:#fafafa;transform:scaleX(0.9450);">Git</span>
<span class="t" style="left:226px;top:8.0px;color:#fafafa;transform:scaleX(0.9819);">Proyecto</span>
<span class="t" style="left:293px;top:8.0px;color:#fafafa;transform:scaleX(1.0205);">Compilar</span>
<span class="t" style="left:362px;top:8.0px;color:#fafafa;transform:scaleX(0.9571);">Depurar</span>
<span class="t" style="left:424px;top:8.0px;color:#fafafa;transform:scaleX(0.9958);">Formato</span>
<span class="t" style="left:489px;top:8.0px;color:#fafafa;transform:scaleX(0.9431);">Prueba</span>
<span class="t" style="left:546px;top:8.0px;color:#fafafa;transform:scaleX(0.9571);">Analizar</span>
<span class="t" style="left:608px;top:8.0px;color:#fafafa;transform:scaleX(0.9787);">Herramientas</span>
<span class="t" style="left:698.5px;top:8.0px;color:#fafafa;transform:scaleX(0.9484);">Extensiones</span>
<span class="t" style="left:781px;top:8.0px;color:#fafafa;transform:scaleX(0.9535);">Ventana</span>
<span class="t" style="left:843px;top:8.0px;color:#fafafa;transform:scaleX(1.0055);">Ayuda</span>
<span class="t" style="left:902px;top:8.0px;color:#b4b4b4;transform:scaleX(0.9679);">Buscar (Ctrl+Q)</span>
<span class="t" style="left:1143px;top:8.0px;color:#9d9d9d;transform:scaleX(0.9048);">CREADOR DE C...JCPOS2021 PHP</span>
<span class="t" style="left:1349px;top:9.0px;color:#fafafa;transform:scaleX(0.9710);">Iniciar sesión</span>
<span class="t" style="left:279px;top:38.0px;color:#fafafa;transform:scaleX(0.9611);">Debug</span>
<span class="t" style="left:350px;top:38.0px;color:#fafafa;transform:scaleX(0.9319);">Any CPU</span>
<span class="t" style="left:483px;top:38.0px;color:#fafafa;transform:scaleX(0.8998);">CREADOR DE CATALOGOS MVC CRUD PARA JCPOS2021 PHP</span>
<span class="t" style="left:1488px;top:40.0px;color:#fafafa;transform:scaleX(0.9150);">Live Share</span>
<span class="t" style="left:37px;top:75.0px;color:#fafafa;font-weight:700;transform:scaleX(0.9586);">Form1.vb [Diseño]</span>
<span class="t" style="left:77.3px;top:120.0px;color:#000;transform:scaleX(0.9374);">Form1</span>
<span class="t" style="left:25px;top:73.0px;color:#fafafa;transform-origin:0 0;transform:rotate(90deg) scaleX(0.9595);">Explorador de servidores</span>
<span class="t" style="left:25px;top:213.5px;color:#fafafa;transform-origin:0 0;transform:rotate(90deg) scaleX(0.9775);">Cuadro de herramientas</span>
<span class="t" style="left:25px;top:352.5px;color:#fafafa;transform-origin:0 0;transform:rotate(90deg) scaleX(0.9571);">Orígenes de datos</span>
<span class="t" style="left:1251px;top:76.0px;color:#fafafa;transform:scaleX(0.9796);">Explorador de soluciones</span>
<span class="t" style="left:1252.5px;top:125.0px;color:#a8a8a8;transform:scaleX(0.9674);">Buscar en Explorador de soluciones (Ctrl+´)</span>
<span class="t" style="left:1282.3px;top:147.0px;color:#fafafa;transform:scaleX(0.9928);">Solución</span>
<div style="left:1332.2px;top:147.0px;width:260.79999999999995px;height:16px;overflow:hidden"><span class="t" style="left:0;top:0;position:absolute;color:#fafafa;transform:scaleX(0.8963);">"CREADOR DE CATALOGOS MVC CRUD PARA JCPOS2021 PHP"</span></div>
<div style="left:1300.4px;top:166.0px;width:292.5999999999999px;height:16px;overflow:hidden"><span class="t" style="left:0;top:0;position:absolute;color:#fafafa;font-weight:700;transform:scaleX(0.9137);">CREADOR DE CATALOGOS MVC CRUD PARA JCPOS2021 PHP</span></div>
<span class="t" style="left:1318px;top:185.0px;color:#fafafa;transform:scaleX(0.9644);">Dependencias</span>
<span class="t" style="left:1318px;top:204.0px;color:#fafafa;transform:scaleX(1.0055);">My Project</span>
<span class="t" style="left:1318px;top:223.0px;color:#fafafa;transform:scaleX(0.9919);">ApplicationEvents.vb</span>
<span class="t" style="left:1318px;top:242.0px;color:#fafafa;transform:scaleX(0.9766);">Form1.vb</span>
<span class="t" style="left:1336px;top:261.0px;color:#fafafa;transform:scaleX(0.9716);">Form1.Designer.vb</span>
<span class="t" style="left:1336px;top:280.0px;color:#fafafa;transform:scaleX(0.9392);">Form1.resx</span>
<span class="t" style="left:1252px;top:490.0px;color:#fafafa;transform:scaleX(0.9759);">Explorador de soluciones</span>
<span class="t" style="left:1397px;top:490.0px;color:#fafafa;transform:scaleX(0.9385);">Cambios de GIT</span>
<span class="t" style="left:1251px;top:519.0px;color:#fafafa;transform:scaleX(0.9571);">Propiedades</span>
<span class="t" style="left:1253px;top:541.0px;color:#fafafa;font-weight:700;transform:scaleX(0.9267);">Form1</span>
<span class="t" style="left:1295px;top:541.0px;color:#fafafa;transform:scaleX(0.9771);">System.Windows.Forms.Form</span>
<span class="t" style="left:1266px;top:590.0px;color:#fafafa;transform:scaleX(0.9718);">Cursor</span>
<span class="t" style="left:1418px;top:590.0px;color:#fafafa;">Default</span>
<span class="t" style="left:1266px;top:609.0px;color:#fafafa;">Font</span>
<span class="t" style="left:1418px;top:609.0px;color:#fafafa;transform:scaleX(0.9402);">Segoe UI, 9pt</span>
<span class="t" style="left:1266px;top:628.0px;color:#fafafa;transform:scaleX(0.9745);">ForeColor</span>
<span class="t" style="left:1444.5px;top:628.0px;color:#fafafa;">ControlText</span>
<span class="t" style="left:1266px;top:647.0px;color:#fafafa;transform:scaleX(0.9702);">FormBorderStyle</span>
<span class="t" style="left:1418px;top:647.0px;color:#fafafa;transform:scaleX(0.9655);">Sizable</span>
</div>
</body></html>
